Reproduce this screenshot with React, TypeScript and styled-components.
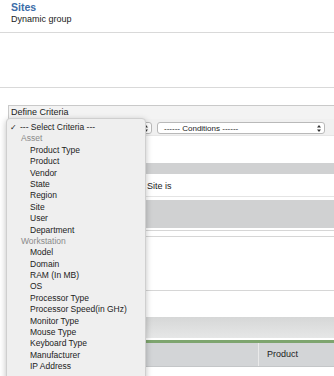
import React from "react";
import styled, { createGlobalStyle } from "styled-components";

const GlobalStyle = createGlobalStyle`
  *, *::before, *::after {
    box-sizing: border-box;
  }
  html, body {
    margin: 0;
    padding: 0;
    background: #fff;
    overflow: hidden;
  }
  body {
    font-family: "Liberation Sans", Arial, sans-serif;
    color: #222;
  }
`;

const Page = styled.div`
  position: relative;
  width: 334px;
  height: 376px;
  overflow: hidden;
`;

/**
 * Cabeçalho com título e subtítulo.
 */
const Header = styled.header`
  height: 33px;
  padding: 1px 11px 0;
  border-bottom: 1px solid #d9d9d9;
`;

const Title = styled.h1`
  margin: 0;
  font-size: 10.5px;
  line-height: 12px;
  font-weight: bold;
  color: #3a6ca8;
`;

const Subtitle = styled.div`
  font-size: 9px;
  line-height: 13px;
  color: #222;
`;

const EmptySection = styled.div`
  height: 55px;
  border-bottom: 1px solid #d9d9d9;
`;

/**
 * Caixa "Define Criteria".
 */
const CriteriaBox = styled.section`
  margin: 17px 0 0 8px;
  width: 340px;
  border-top: 1px solid #c9c9c9;
  border-left: 1px solid #c9c9c9;
`;

const BoxHeader = styled.div`
  height: 13px;
  padding-left: 2px;
  font-size: 9px;
  line-height: 13px;
  background: #f3f3f3;
`;

const SelectRow = styled.div`
  display: flex;
  gap: 5px;
  height: 17px;
  padding-top: 3px;
  background: #f0f0f0;
  border-bottom: 1px solid #e6e6e6;
`;

const FakeSelect = styled.div<{ $width: number }>`
  display: flex;
  align-items: center;
  justify-content: space-between;
  width: ${(p) => p.$width}px;
  height: 12px;
  padding: 0 2px 0 6px;
  background: #fff;
  border: 1px solid #b9b9b9;
  border-radius: 3px;
  font-size: 8px;
  color: #222;
`;

const Arrows = () => (
  <svg width="6" height="9" viewBox="0 0 6 9">
    <path d="M1 3.5 L3 1 L5 3.5 Z M1 5.5 L3 8 L5 5.5 Z" fill="#333" />
  </svg>
);

const WhiteGap = styled.div<{ $h: number }>`
  height: ${(p) => p.$h}px;
  background: #fff;
`;

const GrayBar = styled.div<{ $h: number }>`
  height: ${(p) => p.$h}px;
  background: #d0d1d2;
`;

const TextRow = styled.div`
  height: 20px;
  padding-left: 138px;
  font-size: 9px;
  line-height: 19px;
  background: #fff;
  border-bottom: 1px solid #e4e4e4;
`;

const RuleLine = styled.div<{ $gap: number }>`
  height: 1px;
  margin-top: ${(p) => p.$gap}px;
  background: #d6d6d6;
`;

const FooterBand = styled.div`
  height: 21px;
  background: linear-gradient(#d6d7d7, #e6e7e7);
`;

const GreenLine = styled.div`
  height: 3px;
  margin-top: 2px;
  background: #7ea56f;
`;

const TableHead = styled.div`
  display: flex;
  height: 24px;
  background: #d3d5d7;
  border-bottom: 1px solid #c4c6c8;
`;

const HeadCell = styled.div<{ $width?: number }>`
  ${(p) => (p.$width ? `width: ${p.$width}px;` : "flex: 1;")}
  padding-left: 8px;
  font-size: 9px;
  line-height: 23px;
  color: #222;
  & + & {
    border-left: 1px solid #eaeaea;
  }
`;

/**
 * Menu suspenso aberto do primeiro select.
 */
const Menu = styled.ul`
  position: absolute;
  left: 6px;
  top: 118px;
  width: 140px;
  height: 270px;
  margin: 0;
  padding: 3px 0 0;
  list-style: none;
  background: #efefef;
  border: 1px solid #cfcfcf;
  border-radius: 4px;
  box-shadow: 0 2px 6px rgba(0, 0, 0, 0.25);
`;

const MenuItem = styled.li<{ $kind: "selected" | "group" | "option" }>`
  position: relative;
  height: 11.4px;
  font-size: 8.5px;
  line-height: 11.4px;
  white-space: nowrap;
  color: ${(p) => (p.$kind === "group" ? "#8a8a8a" : "#222")};
  padding-left: ${(p) =>
    p.$kind === "option" ? 23 : p.$kind === "group" ? 14 : 13}px;
`;

const Check = styled.span`
  position: absolute;
  left: 3px;
  top: 0;
  font-size: 8px;
`;

const groups: { label: string; items: string[] }[] = [
  {
    label: "Asset",
    items: [
      "Product Type",
      "Product",
      "Vendor",
      "State",
      "Region",
      "Site",
      "User",
      "Department",
    ],
  },
  {
    label: "Workstation",
    items: [
      "Model",
      "Domain",
      "RAM (In MB)",
      "OS",
      "Processor Type",
      "Processor Speed(in GHz)",
      "Monitor Type",
      "Mouse Type",
      "Keyboard Type",
      "Manufacturer",
      "IP Address",
    ],
  },
];

export default function App() {
  return (
    <Page>
      <GlobalStyle />
      <Header>
        <Title>Sites</Title>
        <Subtitle>Dynamic group</Subtitle>
      </Header>
      <EmptySection />
      <CriteriaBox>
        <BoxHeader>Define Criteria</BoxHeader>
        <SelectRow>
          <FakeSelect $width={143}>
            <span />
            <Arrows />
          </FakeSelect>
          <FakeSelect $width={168}>
            <span>------ Conditions ------</span>
            <Arrows />
          </FakeSelect>
        </SelectRow>
        <WhiteGap $h={27} />
        <GrayBar $h={11} />
        <WhiteGap $h={3} />
        <TextRow>Site is</TextRow>
        <WhiteGap $h={3} />
        <GrayBar $h={28} />
        <RuleLine $gap={2} />
        <RuleLine $gap={5} />
        <WhiteGap $h={53} />
        <RuleLine $gap={0} />
        <WhiteGap $h={26} />
        <FooterBand />
        <GreenLine />
        <TableHead>
          <HeadCell $width={249} />
          <HeadCell>Product</HeadCell>
        </TableHead>
      </CriteriaBox>
      <Menu>
        <MenuItem $kind="selected">
          <Check>✓</Check>--- Select Criteria ---
        </MenuItem>
        {groups.map((g) => (
          <React.Fragment key={g.label}>
            <MenuItem $kind="group">{g.label}</MenuItem>
            {g.items.map((it) => (
              <MenuItem key={it} $kind="option">
                {it}
              </MenuItem>
            ))}
          </React.Fragment>
        ))}
      </Menu>
    </Page>
  );
}
